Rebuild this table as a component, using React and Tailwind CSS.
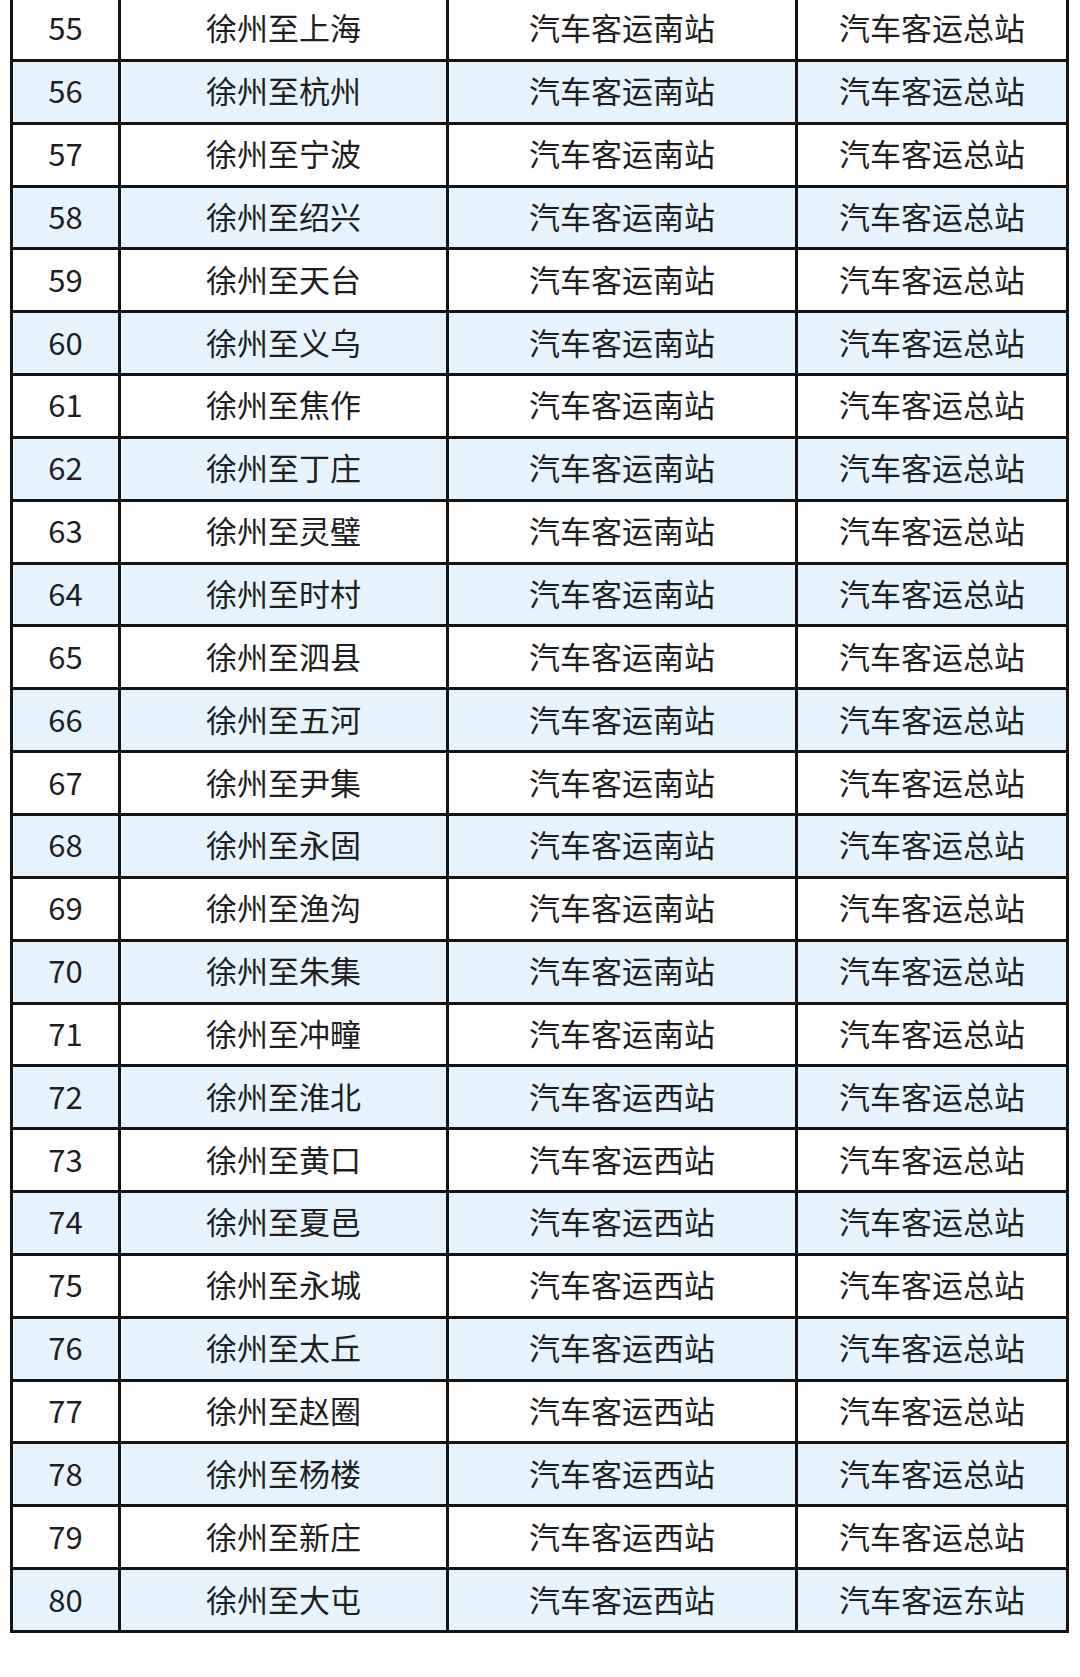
import React from 'react';

const PLACES = [
  '上海', '杭州', '宁波', '绍兴', '天台', '义乌', '焦作', '丁庄', '灵璧', '时村', '泗县', '五河', '尹集',
  '永固', '渔沟', '朱集', '冲疃', '淮北', '黄口', '夏邑', '永城', '太丘', '赵圈', '杨楼', '新庄', '大屯',
];

const ROUTES = PLACES.map((place, i) => {
  const no = 55 + i;
  return {
    no,
    name: `徐州至${place}`,
    from: no >= 72 ? '汽车客运西站' : '汽车客运南站',
    to: no === 80 ? '汽车客运东站' : '汽车客运总站',
  };
});

export default function App() {
  return (
    <div className="w-[1080px] h-[1677px] bg-white overflow-hidden" style={{ fontFamily: '"Noto Sans CJK SC", "Noto Sans", sans-serif' }}>
      <div className="ml-[10px] -mt-[4px] w-[1059px] border-l-[3px] border-t-[3px] border-[#141414]">
        {ROUTES.map((r) => (
          <div
            key={r.no}
            className={`grid grid-cols-[108px_328px_349px_271px] h-[62.85px] border-b-[3px] border-[#141414] text-[31px] text-[#1e1e1e] ${r.no % 2 === 0 ? 'bg-[#e7f3fc]' : 'bg-white'}`}
          >
            {[r.no, r.name, r.from, r.to].map((v, j) => (
              <div key={j} className="flex items-center justify-center pb-[4px] border-r-[3px] border-[#141414] leading-none">
                {v}
              </div>
            ))}
          </div>
        ))}
      </div>
    </div>
  );
}
